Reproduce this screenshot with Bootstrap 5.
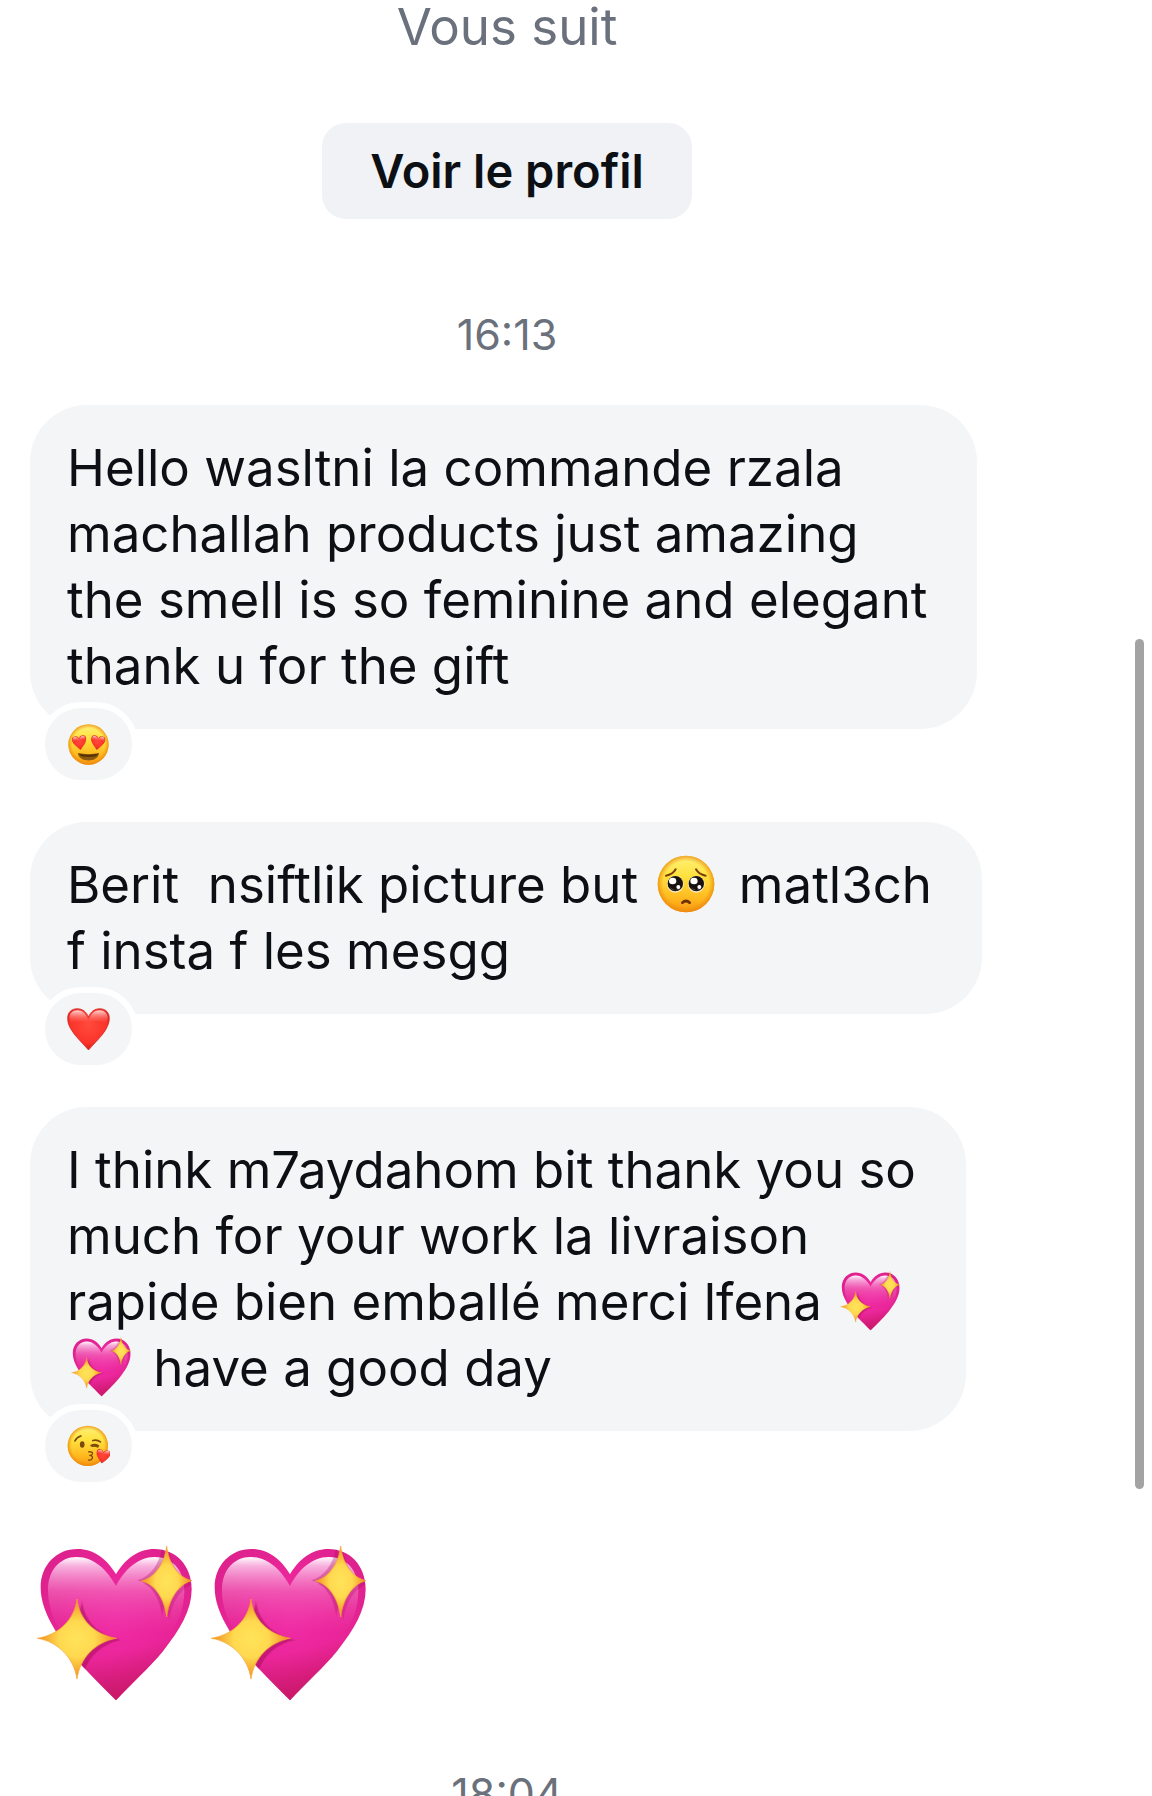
<!DOCTYPE html>
<html lang="fr">
<head>
<meta charset="utf-8">
<meta name="viewport" content="width=device-width, initial-scale=1">
<title>Messages</title>
<link href="https://cdn.jsdelivr.net/npm/bootstrap@5.3.0/dist/css/bootstrap.min.css" rel="stylesheet">
<style>
  body { font-family: Inter, "Liberation Sans", sans-serif; color: #0c1014; background: #fff; }
  .thread { padding-right: 138px; }
  .muted-text { color: #6a717c; }
  .follow-note { font-size: 51px; line-height: 54px; }
  .profile-btn { margin-top: 69px; padding: 24px 48px; border: 0; border-radius: 24px; background: #f0f2f6; color: #0c1014; font-size: 47px; line-height: 48px; font-weight: 600; }
  .stamp { font-size: 43px; line-height: 42px; }
  .stamp-first { margin: 94px 0 50px; }
  .stamp-next { margin-top: 70px; }
  .messages { padding-left: 30px; gap: 36px; }
  .bubble { padding: 30px 50px 30px 37px; border-radius: 57px; background: #f3f5f7; font-size: 51px; line-height: 66px; white-space: pre; }
  .reaction { width: 99px; height: 84px; margin: -27px 0 0 9px; padding: 0; border: 6px solid #fff; border-radius: 42px; background: #f3f5f7; }
  .reaction svg { width: 43px; height: 43px; }
  .inline-emoji { width: 60px; height: 60px; margin: 0 8px 0 4px; vertical-align: -11px; }
  .big-emojis { gap: 17px; padding: 21px 0 0 6px; }
  .big-emojis svg { width: 157px; height: 157px; }
  .scroll-thumb { top: 35.6%; right: 8px; width: 9px; height: 47.3%; border-radius: 5px; background: #a3a3a3; }
</style>
</head>
<body>
<svg width="0" height="0" class="position-absolute" aria-hidden="true">
  <defs>
    <radialGradient id="pinkFill" gradientUnits="userSpaceOnUse" cx="290" cy="270" r="290">
      <stop offset="0" stop-color="#f02ca6"/><stop offset=".5" stop-color="#ea2599"/><stop offset="1" stop-color="#da208a"/>
    </radialGradient>
    <linearGradient id="pinkDeep" gradientUnits="userSpaceOnUse" x1="270" y1="370" x2="300" y2="490">
      <stop offset="0" stop-color="#c4155f" stop-opacity="0"/><stop offset="1" stop-color="#c4155f" stop-opacity=".75"/>
    </linearGradient>
    <linearGradient id="pinkShine" gradientUnits="userSpaceOnUse" x1="0" y1="80" x2="0" y2="310">
      <stop offset="0" stop-color="#fff"/><stop offset=".12" stop-color="#fbcbec" stop-opacity=".85"/><stop offset=".45" stop-color="#f583c8" stop-opacity=".5"/><stop offset="1" stop-color="#f04cb0" stop-opacity="0"/>
    </linearGradient>
    <radialGradient id="gold">
      <stop offset="0" stop-color="#ffe35a"/><stop offset=".45" stop-color="#ffd94f"/><stop offset="1" stop-color="#f08c1e"/>
    </radialGradient>
    <linearGradient id="faceFill" x1="0" y1="0" x2="0" y2="1">
      <stop offset="0" stop-color="#fff27a"/><stop offset=".35" stop-color="#ffe23f"/><stop offset=".75" stop-color="#ffb91f"/><stop offset="1" stop-color="#f8960f"/>
    </linearGradient>
    <radialGradient id="faceRim">
      <stop offset=".8" stop-color="#ee8d10" stop-opacity="0"/><stop offset="1" stop-color="#e8860e" stop-opacity=".75"/>
    </radialGradient>
    <radialGradient id="redFill" cx=".5" cy=".4" r=".65">
      <stop offset="0" stop-color="#ff4a3c"/><stop offset=".65" stop-color="#fb342b"/><stop offset="1" stop-color="#cf1712"/>
    </radialGradient>
    <linearGradient id="redShine" x1="0" y1="0" x2="0" y2="1">
      <stop offset="0" stop-color="#fff" stop-opacity=".8"/><stop offset="1" stop-color="#ff6a5c" stop-opacity="0"/>
    </linearGradient>
    <path id="heartShape" d="M288 511C225 446 150 380 105 300C78 255 62 215 62 172C62 105 110 57 172 57C222 57 262 88 288 133C314 88 354 57 404 57C466 57 515 105 515 178C515 240 480 300 430 362C390 411 335 460 288 511Z"/>
    <clipPath id="heartClip"><use href="#heartShape"/></clipPath>
    <path id="starLarge" d="M171 207C178 267 220 312 289 325C225 337 180 385 171 447C162 385 115 335 52 325C118 314 164 267 171 207Z"/>
    <path id="starSmall" d="M440 48C446 100 474 142 516 152C476 162 447 207 440 261C433 207 406 163 364 153C406 142 434 100 440 48Z"/>
  </defs>
  <symbol id="sparkHeart" viewBox="48 45 471 471">
    <use href="#heartShape" fill="url(#pinkFill)"/>
    <use href="#heartShape" fill="url(#pinkDeep)"/>
    <path d="M288 168C262 120 222 81 170 81C120 81 84 120 84 180C84 230 100 270 126 310H452C478 270 493 230 493 180C493 120 456 81 404 81C354 81 312 120 288 168Z" fill="url(#pinkShine)"/>
    <g clip-path="url(#heartClip)" fill="#a80d5c" opacity=".55">
      <use href="#starLarge" transform="translate(15 5)"/>
      <use href="#starSmall" transform="translate(-13 -2)" opacity=".6"/>
      <use href="#starSmall" transform="translate(8 9)" opacity=".5"/>
    </g>
    <use href="#starLarge" fill="url(#gold)" stroke="#f6a52c" stroke-width="2"/>
    <use href="#starSmall" fill="url(#gold)" stroke="#f6a52c" stroke-width="2"/>
  </symbol>
  <symbol id="redHeart" viewBox="0 0 130 130">
    <path d="M65 127C48 107 26 88 13 66C5 53 2 43 2 31C2 14 13 2 31 2C47 2 59 12 65 27C71 12 83 2 99 2C117 2 128 14 128 31C128 43 124 53 117 66C104 88 82 107 65 127Z" fill="url(#redFill)" stroke="#cc1d18" stroke-width="2"/>
    <path d="M65 38C59 18 47 7 31 7C16 7 7 17 7 31C7 38 9 43 11 47C30 38 48 38 65 42C82 38 100 38 118 47C121 41 123 37 123 31C123 17 114 7 99 7C83 7 71 18 65 38Z" fill="url(#redShine)"/>
  </symbol>
  <symbol id="heartEyes" viewBox="111 95 130 130">
    <circle cx="176" cy="160" r="61" fill="url(#faceFill)"/><circle cx="176" cy="160" r="61" fill="url(#faceRim)"/>
    <use href="#redHeart" x="127" y="133" width="44" height="44" transform="rotate(-8 149 155)"/>
    <use href="#redHeart" x="182" y="133" width="44" height="44" transform="rotate(8 204 155)"/>
    <path d="M144 186Q176 193 208 186C207 216 145 216 144 186Z" fill="#8a5a10"/>
    <path d="M147 188Q176 194 205 188Q202 194 195 196Q176 199 157 196Q150 194 147 188Z" fill="#5a3205"/>
  </symbol>
  <symbol id="kissFace" viewBox="111 73 130 130">
    <circle cx="174" cy="136" r="61" fill="url(#faceFill)"/><circle cx="174" cy="136" r="61" fill="url(#faceRim)"/>
    <g fill="none" stroke="#7a4a0a" stroke-width="5" stroke-linecap="round" stroke-linejoin="round">
      <path d="M135 121Q140 110 153 106"/><path d="M189 120Q201 116 212 124"/>
      <path d="M184 135Q196 129 206 136"/><path d="M187 137Q196 134 204 139"/>
      <path d="M176 154Q190 153 188 160Q186 165 180 165Q189 166 188 173Q186 180 176 179" stroke-width="4"/>
    </g>
    <ellipse cx="157" cy="132" rx="7" ry="10" fill="#7a4a0a"/>
    <use href="#redHeart" x="198" y="147" width="43" height="43" transform="rotate(10 219 168)"/>
  </symbol>
  <symbol id="pleadFace" viewBox="53 43 180 180">
    <circle cx="143" cy="133" r="85" fill="url(#faceFill)"/><circle cx="143" cy="133" r="85" fill="url(#faceRim)"/>
    <g fill="none" stroke="#7a3c0c" stroke-width="6" stroke-linecap="round">
      <path d="M83 108Q103 105 112 89"/><path d="M173 89Q182 105 202 108"/>
    </g>
    <circle cx="111" cy="134" r="25" fill="#f7e9c8"/><circle cx="174" cy="134" r="25" fill="#f7e9c8"/>
    <circle cx="111" cy="132" r="23" fill="#17120f"/><circle cx="174" cy="132" r="23" fill="#17120f"/>
    <path d="M95 143Q111 160 127 143Q122 152 111 152Q100 152 95 143ZM158 143Q174 160 190 143Q185 152 174 152Q163 152 158 143Z" fill="#777"/>
    <g fill="#fff"><ellipse cx="103" cy="124" rx="11" ry="10"/><ellipse cx="167" cy="124" rx="11" ry="10"/><circle cx="120" cy="142" r="6"/><circle cx="183" cy="142" r="6"/></g>
    <path d="M132 189Q143 179 154 189" fill="none" stroke="#6b2f0a" stroke-width="8" stroke-linecap="round"/>
  </symbol>
</svg>

<div class="vh-100 overflow-hidden position-relative">
  <main class="thread">
    <header class="d-flex flex-column align-items-center">
      <p class="follow-note muted-text mb-0">Vous suit</p>
      <button type="button" class="btn profile-btn">Voir le profil</button>
    </header>
    <p class="stamp stamp-first muted-text text-center">16:13</p>
    <div class="messages d-flex flex-column">
      <article class="d-flex flex-column align-items-start">
        <div class="bubble">Hello wasltni la commande rzala<br>machallah products just amazing<br>the smell is so feminine and elegant<br>thank u for the gift</div>
        <button type="button" class="reaction d-flex align-items-center justify-content-center" aria-label="Réaction"><svg aria-hidden="true"><use href="#heartEyes"/></svg></button>
      </article>
      <article class="d-flex flex-column align-items-start">
        <div class="bubble">Berit  nsiftlik picture but <svg class="inline-emoji" aria-hidden="true"><use href="#pleadFace"/></svg> matl3ch<br>f insta f les mesgg</div>
        <button type="button" class="reaction d-flex align-items-center justify-content-center" aria-label="Réaction"><svg aria-hidden="true"><use href="#redHeart"/></svg></button>
      </article>
      <article class="d-flex flex-column align-items-start">
        <div class="bubble">I think m7aydahom bit thank you so<br>much for your work la livraison<br>rapide bien emballé merci lfena <svg class="inline-emoji" aria-hidden="true"><use href="#sparkHeart"/></svg><br><svg class="inline-emoji" aria-hidden="true"><use href="#sparkHeart"/></svg> have a good day</div>
        <button type="button" class="reaction d-flex align-items-center justify-content-center" aria-label="Réaction"><svg aria-hidden="true"><use href="#kissFace"/></svg></button>
      </article>
      <article class="big-emojis d-flex">
        <svg aria-hidden="true"><use href="#sparkHeart"/></svg>
        <svg aria-hidden="true"><use href="#sparkHeart"/></svg>
      </article>
    </div>
    <p class="stamp stamp-next muted-text text-center">18:04</p>
  </main>
  <div class="scroll-thumb position-absolute"></div>
</div>
<script src="https://cdn.jsdelivr.net/npm/bootstrap@5.3.0/dist/js/bootstrap.bundle.min.js"></script>
</body>
</html>
